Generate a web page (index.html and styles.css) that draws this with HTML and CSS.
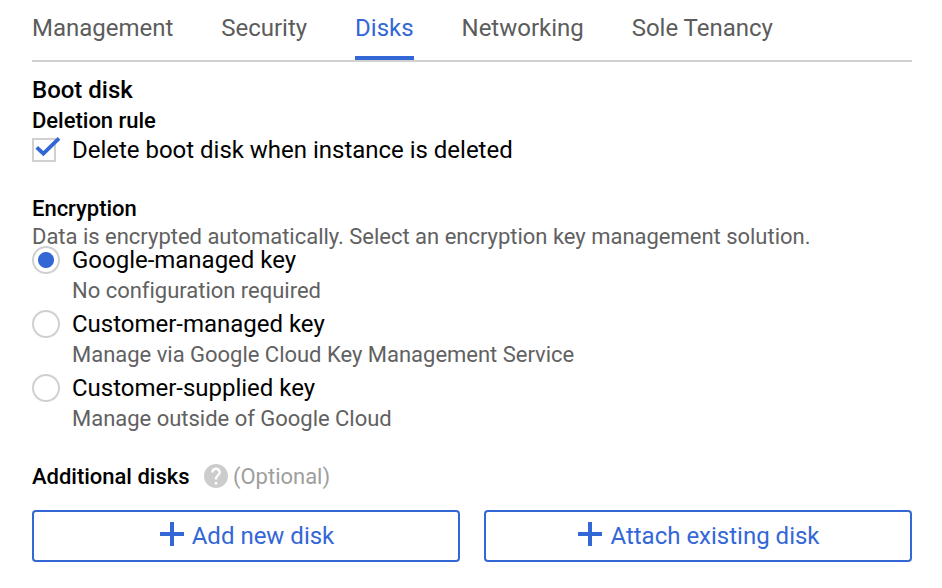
FILE: index.html
```html
<!DOCTYPE html>
<html lang="en">
<head>
<meta charset="utf-8">
<title>Disks</title>
<link rel="stylesheet" href="styles.css">
</head>
<body>
<nav class="tabs">
  <a class="tab">Management</a>
  <a class="tab">Security</a>
  <a class="tab active">Disks</a>
  <a class="tab">Networking</a>
  <a class="tab">Sole Tenancy</a>
</nav>
<main>
  <h2 class="title">Boot disk</h2>
  <h3 class="label">Deletion rule</h3>
  <label class="check-row">
    <svg class="check" width="30" height="28" viewBox="0 0 30 28"><rect x="1" y="4" width="22" height="22" fill="#fff" stroke="#d0d0d0" stroke-width="2"/><path d="M4.700 12.300L11.400 18.700L27 3.400" fill="none" stroke="#3367d6" stroke-width="3.800"/></svg>
    <span class="option-name">Delete boot disk when instance is deleted</span>
  </label>
  <h3 class="label encryption">Encryption</h3>
  <p class="desc">Data is encrypted automatically. Select an encryption key management solution.</p>
  <div class="options">
    <div class="option"><span class="radio on"></span><div><div class="option-name">Google-managed key</div><div class="hint">No configuration required</div></div></div>
    <div class="option"><span class="radio"></span><div><div class="option-name">Customer-managed key</div><div class="hint">Manage via Google Cloud Key Management Service</div></div></div>
    <div class="option"><span class="radio"></span><div><div class="option-name">Customer-supplied key</div><div class="hint">Manage outside of Google Cloud</div></div></div>
  </div>
  <div class="additional">
    <h3 class="label">Additional disks</h3>
    <svg class="help" width="24" height="24" viewBox="2 2 20 20"><path fill="#ccc" d="M12 2C6.48 2 2 6.48 2 12s4.48 10 10 10 10-4.48 10-10S17.52 2 12 2zm1 17h-2v-2h2v2zm2.070-7.750l-.9.920C13.450 12.900 13 13.500 13 15h-2v-.5c0-1.100.450-2.100 1.170-2.830l1.240-1.260c.370-.360.590-.860.590-1.410 0-1.100-.9-2-2-2s-2 .9-2 2H8c0-2.210 1.790-4 4-4s4 1.790 4 4c0 .880-.360 1.680-.930 2.250z"/></svg>
    <span class="optional">(Optional)</span>
  </div>
  <div class="buttons">
    <button><svg class="plus" width="24" height="24" viewBox="0 0 24 24"><path d="M12 0V24M0 12H24" stroke="#3367d6" stroke-width="4"/></svg><span>Add new disk</span></button>
    <button><svg class="plus" width="24" height="24" viewBox="0 0 24 24"><path d="M12 0V24M0 12H24" stroke="#3367d6" stroke-width="4"/></svg><span>Attach existing disk</span></button>
  </div>
</main>
</body>
</html>
```
FILE: styles.css
```css
* { box-sizing: border-box; }
body { margin: 0; padding: 0 30px 0 32px; background: #fff; color: #000; font-family: Roboto, sans-serif; letter-spacing: -0.015px; }
h2, h3, p { margin: 0; }
.tabs { display: flex; gap: 48px; height: 62px; border-bottom: 2px solid #d0d0d0; }
.tab { height: 60px; line-height: 56px; font-size: 24px; color: #5c5c5c; white-space: nowrap; }
.tab.active { color: #3367d6; border-bottom: 4px solid #3367d6; }
.title { margin-top: 12px; font-size: 24px; line-height: 32px; font-weight: 500; }
.label { height: 28px; font-size: 22px; line-height: 30px; font-weight: 500; }
.check-row { display: flex; height: 32px; align-items: center; }
.check { margin: -2px 10px 0 0; }
.option-name { font-size: 24px; line-height: 32px; white-space: nowrap; }
.encryption { margin-top: 28px; }
.desc { font-size: 22px; line-height: 30px; height: 22px; color: #616161; white-space: nowrap; }
.option { display: flex; height: 64px; }
.radio { width: 28px; height: 28px; margin: 2px 12px 0 0; border: 2px solid #d0d0d0; border-radius: 50%; background: #fff; }
.radio.on { background: radial-gradient(circle, #3367d6 7.5px, #fff 8.5px); }
.hint { font-size: 22px; line-height: 30px; color: #616161; white-space: nowrap; }
.additional { display: flex; align-items: center; margin-top: 26px; height: 28px; }
.help { margin: 0 5px 0 14.5px; }
.optional { font-size: 22px; color: #9e9e9e; }
.buttons { display: flex; gap: 24px; margin-top: 20px; }
button { display: flex; flex: 1; height: 52px; align-items: center; justify-content: center; gap: 8px; padding: 0 0 0 2px; border: 2px solid #3367d6; border-radius: 4px; background: #fff; color: #3367d6; font-family: inherit; font-size: 24px; }
.plus { margin-bottom: 4px; }
```
